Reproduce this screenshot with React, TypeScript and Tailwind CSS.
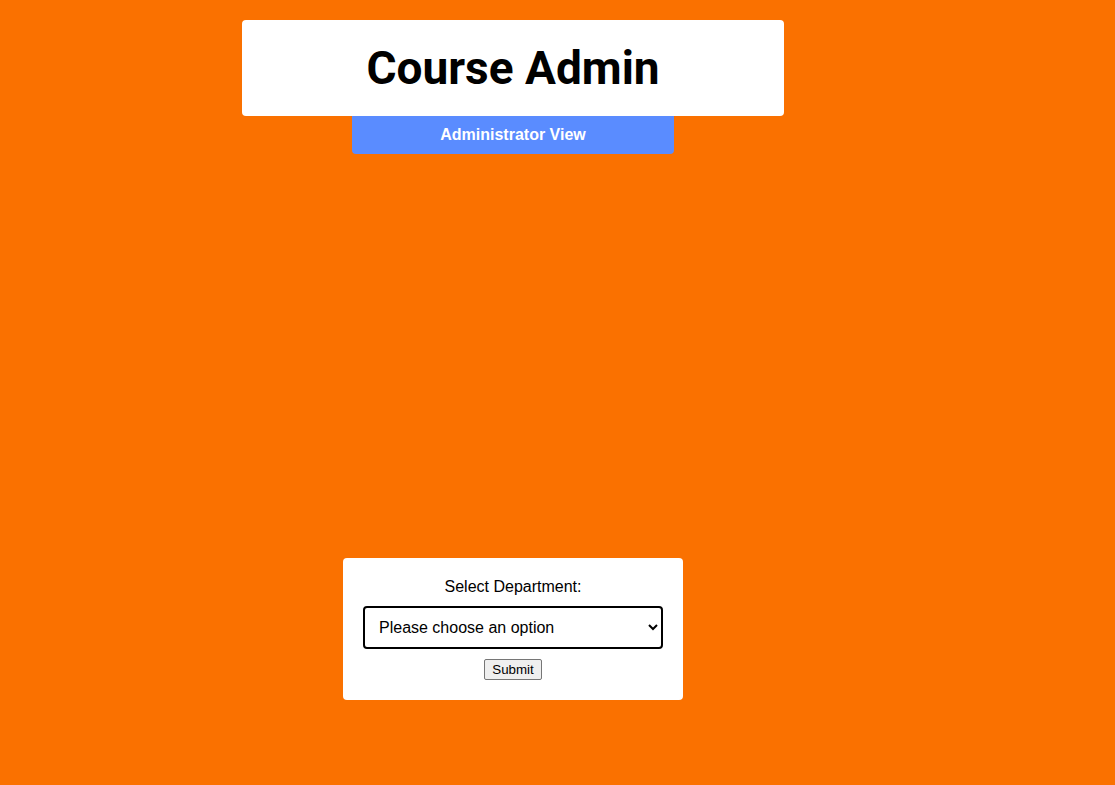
import React, { useState } from 'react';

const App: React.FC = () => {
  const [department, setDepartment] = useState('');

  return (
    <div className="min-h-[785px] w-full bg-[#fa7100] font-['Liberation_Sans',Arial,sans-serif]">
      <div className="flex w-[1026px] flex-col items-center pt-[20px]">
        <div className="flex h-[96px] w-[542px] items-center justify-center rounded-[4px] bg-white">
          <h1 className="font-['Roboto',sans-serif] text-[46px] font-bold leading-none text-black">Course Admin</h1>
        </div>
        <button className="flex h-[38px] w-[322px] items-center justify-center rounded-b-[4px] bg-[#5a8cff] text-[16px] font-bold text-white">
          Administrator View
        </button>

        <form
          className="mt-[404px] flex w-[340px] flex-col items-center rounded-[4px] bg-white p-[20px]"
          onSubmit={(e) => e.preventDefault()}
        >
          <label htmlFor="department" className="text-[16px] leading-[18px] text-black">Select Department:</label>
          <select
            id="department"
            value={department}
            onChange={(e) => setDepartment(e.target.value)}
            className="mt-[10px] h-[43px] w-[300px] rounded-[4px] border-2 border-black bg-white pl-[10px] text-[16px] text-black"
          >
            <option value="">Please choose an option</option>
            <option value="cs">Computer Science</option>
            <option value="math">Mathematics</option>
            <option value="eng">Engineering</option>
          </select>
          <button
            type="submit"
            className="mt-[10px] h-[21px] rounded-[2px] border border-[#767676] bg-[#efefef] px-[7px] text-[13.33px] leading-none text-black"
          >
            Submit
          </button>
        </form>
      </div>
    </div>
  );
};

export default App;
